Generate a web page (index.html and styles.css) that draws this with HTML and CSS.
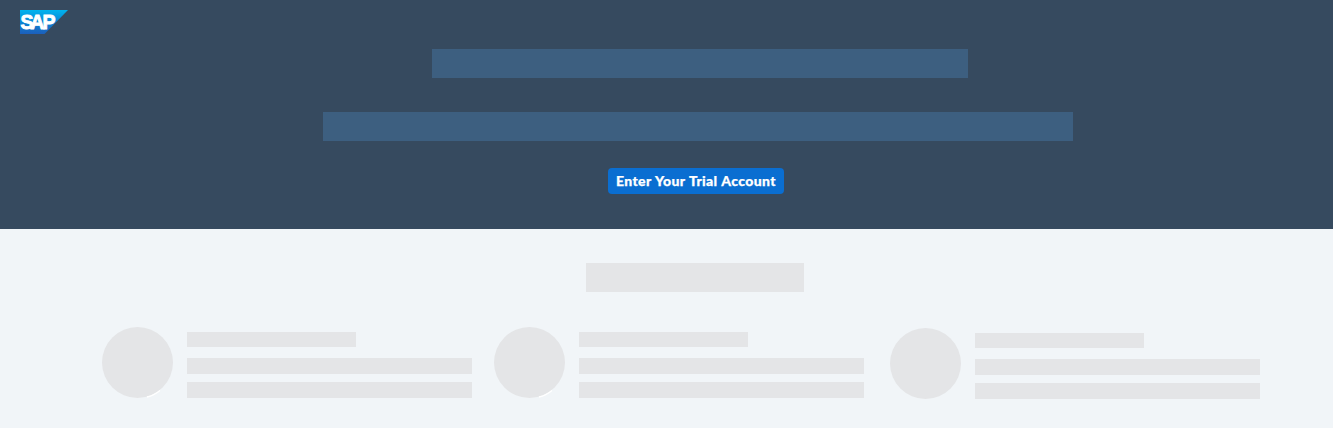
FILE: index.html
```html
<!DOCTYPE html>
<html lang="en">
<head>
<meta charset="utf-8">
<title>SAP Trial</title>
<link rel="stylesheet" href="styles.css">
</head>
<body>
<header class="hero">
  <svg class="logo" width="48" height="24" viewBox="0 0 48 24" role="img" aria-label="SAP">
    <defs>
      <linearGradient id="logo-fill" x1="0" y1="0" x2="0" y2="1">
        <stop offset="0" stop-color="#00b4ee"/>
        <stop offset="0.5" stop-color="#0a85d5"/>
        <stop offset="1" stop-color="#1d5fbb"/>
      </linearGradient>
    </defs>
    <path d="M0 0H48L24.5 24H0Z" fill="url(#logo-fill)"/>
    <text class="logo-text" y="18.8" x="0.4 10.2 22.4">SAP</text>
  </svg>
  <div class="hero-title"></div>
  <div class="hero-subtitle"></div>
  <button class="enter" type="button"><span class="enter-label">Enter Your Trial Account</span></button>
</header>
<main class="content">
  <div class="section-title"></div>
  <div class="cards">
    <div class="card">
      <svg class="avatar" width="71" height="71" viewBox="0 0 71 71"><circle class="disc" cx="35.5" cy="35.5" r="35.5"/><path class="glint" d="M45 70Q52 68.5 58 63.5"/></svg>
      <div class="lines"><div class="line heading"></div><div class="line"></div><div class="line"></div></div>
    </div>
    <div class="card">
      <svg class="avatar" width="71" height="71" viewBox="0 0 71 71"><circle class="disc" cx="35.5" cy="35.5" r="35.5"/><path class="glint" d="M45 70Q52 68.5 58 63.5"/></svg>
      <div class="lines"><div class="line heading"></div><div class="line"></div><div class="line"></div></div>
    </div>
    <div class="card last">
      <svg class="avatar" width="71" height="71" viewBox="0 0 71 71"><circle class="disc" cx="35.5" cy="35.5" r="35.5"/></svg>
      <div class="lines"><div class="line heading"></div><div class="line"></div><div class="line"></div></div>
    </div>
  </div>
</main>
</body>
</html>
```

FILE: styles.css
```css
* { box-sizing: border-box; }
body {
  margin: 0;
  height: 428px;
  overflow: hidden;
  background: #f1f5f8;
  font-family: Lato, "Noto Sans", sans-serif;
}
.hero {
  display: flex;
  flex-direction: column;
  align-items: flex-start;
  height: 229px;
  padding-top: 10px;
  background: #364a5f;
}
.logo { display: block; margin-left: 20px; }
.logo-text {
  fill: #fff;
  stroke: #fff;
  stroke-width: 0.9;
  font: bold 19.5px "Liberation Sans", Arial, sans-serif;
}
.hero-title {
  width: 536px;
  height: 29px;
  margin: 15px 0 0 432px;
  background: #3d5f80;
}
.hero-subtitle {
  width: 750px;
  height: 29px;
  margin: 34px 0 0 323px;
  background: #3d5f80;
}
.enter {
  display: flex;
  align-items: center;
  justify-content: center;
  width: 176px;
  height: 26px;
  margin: 27px 0 0 608px;
  padding: 0;
  border: 0;
  border-radius: 4px;
  background: #0a6ed1;
  color: #fff;
  font: 900 14px/26px Lato, "Noto Sans", sans-serif;
  letter-spacing: 0.36px;
  word-spacing: 0.6px;
  -webkit-text-stroke: 0.25px #fff;
  white-space: nowrap;
}
.content { padding-top: 34px; }
.section-title {
  width: 218px;
  height: 29px;
  margin-left: 586px;
  background: #e4e5e7;
}
.cards {
  display: flex;
  gap: 22px;
  margin: 35px 0 0 102px;
}
.card { display: flex; gap: 14px; width: 370px; }
.card.last { margin: 1px 0 0 4px; }
.avatar { display: block; flex: none; }
.disc { fill: #e4e5e7; }
.glint { fill: none; stroke: #fff; stroke-width: 1.3; }
.lines {
  display: flex;
  flex-direction: column;
  gap: 8px;
  padding-top: 5px;
}
.line { width: 285px; height: 16px; background: #e4e5e7; }
.line.heading { width: 169px; height: 15px; margin-bottom: 3px; }
```
